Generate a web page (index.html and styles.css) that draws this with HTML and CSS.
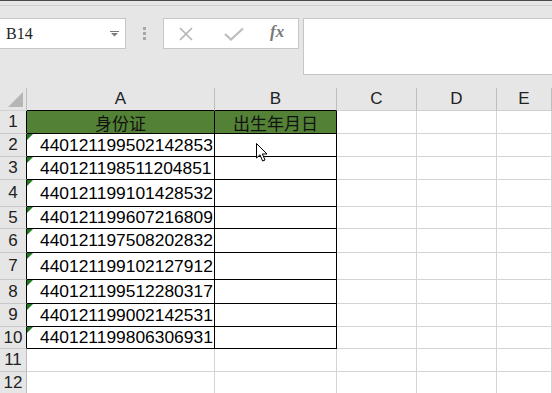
FILE: index.html
```html
<!DOCTYPE html>
<html>
    <head>
        <meta charset="UTF-8">
        <meta name="viewport" content="width=device-width, initial-scale=1.0">
        <title>身份证 - 出生年月日</title>
        <link rel="stylesheet" href="styles.css">
    </head>

    <body>
        <!-- 编辑栏 -->
        <div class="formula-area">
            <div class="top-edge"></div>
            <div class="formula-row">
                <div class="name-box">
                    <span class="cell-ref">B14</span>
                    <svg class="drop-arrow" width="9" height="6" viewBox="0 0 9 6">
                        <rect x="0" y="0" width="9" height="1" fill="#7a7a7a"/>
                        <path d="M1 2 L8 2 L4.5 5.5 Z" fill="#7a7a7a"/>
                    </svg>
                </div>
                <div class="grip"><i></i><i></i><i></i></div>
                <div class="fx-box">
                    <svg class="icon-cancel" width="16" height="14" viewBox="0 0 16 14">
                        <path d="M2 1 L14 13 M14 1 L2 13" stroke="#b4b4b4" stroke-width="1.6" fill="none"/>
                    </svg>
                    <svg class="icon-enter" width="20" height="14" viewBox="0 0 20 14">
                        <path d="M1 7 L7 12.5 L19 1.5" stroke="#bdbdbd" stroke-width="2.2" fill="none"/>
                    </svg>
                    <span class="fx">fx</span>
                </div>
                <div class="formula-input"></div>
            </div>
        </div>

        <!-- 工作表 -->
        <div class="sheet">
            <div class="corner"></div>
            <div class="col-head boxed-head">A</div>
            <div class="col-head boxed-head">B</div>
            <div class="col-head">C</div>
            <div class="col-head">D</div>
            <div class="col-head">E</div>

            <div class="row-head boxed-row">1</div>
            <div class="cell boxed title">身份证</div>
            <div class="cell boxed title">出生年月日</div>
            <div class="cell"></div><div class="cell"></div><div class="cell"></div>

            <div class="row-head boxed-row">2</div>
            <div class="cell boxed id">440121199502142853</div>
            <div class="cell boxed"></div>
            <div class="cell"></div><div class="cell"></div><div class="cell"></div>

            <div class="row-head boxed-row">3</div>
            <div class="cell boxed id">440121198511204851</div>
            <div class="cell boxed"></div>
            <div class="cell"></div><div class="cell"></div><div class="cell"></div>

            <div class="row-head boxed-row">4</div>
            <div class="cell boxed id">440121199101428532</div>
            <div class="cell boxed"></div>
            <div class="cell"></div><div class="cell"></div><div class="cell"></div>

            <div class="row-head boxed-row">5</div>
            <div class="cell boxed id">440121199607216809</div>
            <div class="cell boxed"></div>
            <div class="cell"></div><div class="cell"></div><div class="cell"></div>

            <div class="row-head boxed-row">6</div>
            <div class="cell boxed id">440121197508202832</div>
            <div class="cell boxed"></div>
            <div class="cell"></div><div class="cell"></div><div class="cell"></div>

            <div class="row-head boxed-row">7</div>
            <div class="cell boxed id">440121199102127912</div>
            <div class="cell boxed"></div>
            <div class="cell"></div><div class="cell"></div><div class="cell"></div>

            <div class="row-head boxed-row">8</div>
            <div class="cell boxed id">440121199512280317</div>
            <div class="cell boxed"></div>
            <div class="cell"></div><div class="cell"></div><div class="cell"></div>

            <div class="row-head boxed-row">9</div>
            <div class="cell boxed id">440121199002142531</div>
            <div class="cell boxed"></div>
            <div class="cell"></div><div class="cell"></div><div class="cell"></div>

            <div class="row-head boxed-row">10</div>
            <div class="cell boxed id">440121199806306931</div>
            <div class="cell boxed"></div>
            <div class="cell"></div><div class="cell"></div><div class="cell"></div>

            <div class="row-head">11</div>
            <div class="cell"></div><div class="cell"></div>
            <div class="cell"></div><div class="cell"></div><div class="cell"></div>

            <div class="row-head">12</div>
            <div class="cell"></div><div class="cell"></div>
            <div class="cell"></div><div class="cell"></div><div class="cell"></div>

            <!-- 鼠标指针 -->
            <svg class="pointer" width="13" height="20" viewBox="0 0 13 20">
                <path d="M0.5 0.5 L0.5 15 L4 11.8 L6.6 18 L9 17 L6.4 11 L11 11 Z" fill="#fff" stroke="#000" stroke-width="1"/>
            </svg>
        </div>
    </body>
</html>
```

FILE: styles.css
```css
html{
    height: 100%;
}
body{
    margin: 0;
    width: 552px;
    height: 393px;
    overflow: hidden;
    background-color: #e6e6e6;
    font-family: "Liberation Sans", "Noto Sans CJK SC", sans-serif;
}

/* 编辑栏 */
.formula-area{
    height: 88px;
    overflow: hidden;
}
.top-edge{
    height: 4px;
    border-top: 1px solid #4a4a4a;
    border-bottom: 1px solid #cfcfcf;
}
.formula-row{
    display: flex;
    align-items: flex-start;
    margin-top: 12px;
}
.name-box{
    display: flex;
    align-items: center;
    justify-content: space-between;
    box-sizing: border-box;
    width: 127px;
    height: 31px;
    margin-left: -1px;
    padding: 0 6px 0 6px;
    background: #fff;
    border: 1px solid #c6c6c6;
}
.cell-ref{
    font-family: "Liberation Serif", serif;
    font-size: 16px;
    color: #222;
}
.grip{
    display: flex;
    flex-direction: column;
    align-items: center;
    gap: 2px;
    width: 37px;
    padding-top: 9px;
}
.grip i{
    width: 3px;
    height: 3px;
    background: #a8a8a8;
}
.fx-box{
    display: flex;
    align-items: center;
    box-sizing: border-box;
    width: 136px;
    height: 31px;
    padding-left: 14px;
    background: #fff;
    border: 1px solid #c6c6c6;
}
.icon-cancel{
    margin-right: 30px;
}
.icon-enter{
    margin-right: 26px;
}
.fx{
    font-family: "Liberation Serif", serif;
    font-style: italic;
    font-weight: bold;
    font-size: 17px;
    color: #7a7a7a;
    margin-top: -3px;
}
.formula-input{
    flex: 1;
    height: 57px;
    margin-left: 4px;
    margin-right: -3px;
    box-sizing: border-box;
    background: #fff;
    border: 1px solid #c6c6c6;
}

/* 工作表 */
.sheet{
    position: relative;
    display: grid;
    grid-template-columns: 27px 188px 122px 80px 80px 1fr;
    grid-template-rows: 23px 23px 23px 23px 27px 22px 24px 27px 24px 23px 22px 23px 23px;
    background: #fff;
}
.sheet > div{
    box-sizing: border-box;
}
.corner{
    position: relative;
    background: #e6e6e6;
    border-right: 1px solid #bdbdbd;
    border-bottom: 1px solid #d0d0d0;
}
.corner::after{
    content: "";
    position: absolute;
    right: 3px;
    bottom: 3px;
    border-left: 15px solid transparent;
    border-bottom: 15px solid #b6b6b6;
}
.col-head{
    display: flex;
    align-items: center;
    justify-content: center;
    background: #e6e6e6;
    border-right: 1px solid #bdbdbd;
    border-bottom: 1px solid #d0d0d0;
    font-size: 17px;
    color: #222;
}
.col-head.boxed-head{
    border-bottom-color: #000;
}
.row-head{
    display: flex;
    align-items: center;
    justify-content: center;
    background: #e6e6e6;
    border-right: 1px solid #bdbdbd;
    border-bottom: 1px solid #c8c8c8;
    font-size: 17px;
    color: #222;
}
.row-head.boxed-row{
    border-right-color: #000;
}
.cell{
    position: relative;
    display: flex;
    align-items: center;
    border-right: 1px solid #d4d4d4;
    border-bottom: 1px solid #d4d4d4;
    font-size: 17.4px;
    color: #000;
    white-space: nowrap;
}
.cell.boxed{
    border-right-color: #000;
    border-bottom-color: #000;
}
.cell.title{
    justify-content: center;
    background: #538135;
    font-size: 17px;
    color: #111;
}
.cell.id{
    padding-left: 13px;
}
/* 文本格式数字的绿色小三角 */
.cell.id::before{
    content: "";
    position: absolute;
    left: 0;
    top: 0;
    border-top: 6px solid #1f7a1f;
    border-right: 6px solid transparent;
}
.pointer{
    position: absolute;
    left: 256px;
    top: 55px;
}
```
